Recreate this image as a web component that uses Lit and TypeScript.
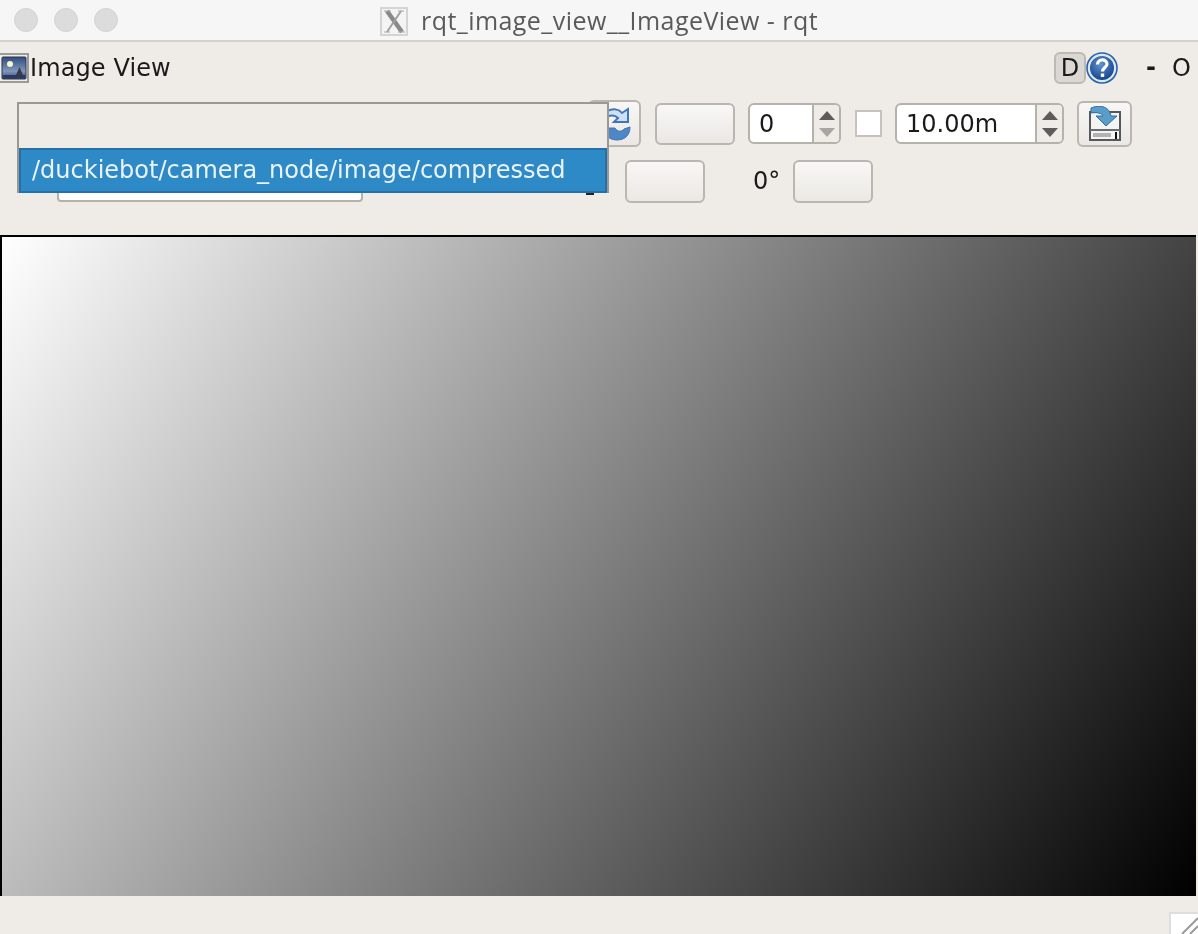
import { LitElement, html, css } from "lit";
import { customElement } from "lit/decorators.js";

@customElement("app-root")
export class AppRoot extends LitElement {
  static styles = css`
    :host { display: block; width: 1198px; height: 934px; position: relative; overflow: hidden; background: #efebe7; font-family: "DejaVu Sans", sans-serif; color: #1a1a1a; }
    .win { display: flex; flex-direction: column; height: 934px; filter: blur(0.45px); }
    .titlebar { flex: none; height: 40px; box-sizing: content-box; border-bottom: 2px solid #d2d2d0; background: #f6f6f6; display: grid; grid-template-columns: 1fr auto 1fr; align-items: center; }
    .dots { display: flex; gap: 16px; padding-left: 14px; }
    .dot { width: 24px; height: 24px; border-radius: 50%; background: #dcdcdc; box-sizing: border-box; border: 1px solid #d3d3d3; }
    .title { display: flex; align-items: center; gap: 13px; font-family: "Open Sans", sans-serif; font-size: 25px; letter-spacing: 0.45px; color: #5a5a5a; white-space: nowrap; }
    .title svg { display: block; margin-top: 2px; }
    .head { flex: none; height: 58px; display: flex; align-items: flex-start; position: relative; }
    .appicon { margin-top: 11px; display: block; flex: none; }
    .headtext { margin-top: 8px; font-size: 24px; line-height: 36px; margin-left: 1px; letter-spacing: 0.1px; }
    .spacer { flex: 1; }
    .dbtn { margin-top: 10px; width: 32px; height: 32px; box-sizing: border-box; border: 2px solid #bdb9b3; border-radius: 6px; background: #dbd8d4; font-size: 24px; line-height: 29px; text-align: center; }
    .help { margin-top: 10px; display: block; }
    .dash { margin: 7px 0 0 28px; font-size: 24px; line-height: 36px; width: 8px; text-align: center; font-weight: 700; }
    .oh { margin: 8px 7px 0 18px; font-size: 24px; line-height: 36px; }
    .row { flex: none; display: flex; align-items: center; }
    .row1 { height: 47px; padding-left: 17px; }
    .row2 { height: 44px; margin-top: 12px; padding-left: 57px; }
    .combo { width: 563px; height: 42px; margin-right: 8px; box-sizing: border-box; border: 2px solid #b5b1ab; border-radius: 6px; }
    .btn { box-sizing: border-box; border: 2px solid #bab6b0; border-radius: 6px; background: linear-gradient(#f8f7f5, #ebe8e4); flex: none; }
    .refresh { width: 53px; height: 47px; margin-right: 14px; display: flex; align-items: center; justify-content: center; padding-left: 8px; }
    .wide { width: 80px; height: 42px; }
    .spin { flex: none; box-sizing: border-box; height: 41px; border: 2px solid #b5b1ab; border-radius: 6px; background: #fff; display: flex; align-items: stretch; font-size: 24px; overflow: hidden; }
    .spin .val { flex: 1; padding-left: 9px; line-height: 39px; }
    .spin .arrows { width: 27px; box-sizing: border-box; border-left: 2px solid #b5b1ab; background: #efebe7; display: flex; flex-direction: column; align-items: center; justify-content: center; gap: 8px; }
    .up { width: 0; height: 0; border-left: 8px solid transparent; border-right: 8px solid transparent; border-bottom: 9px solid #5e5c5a; }
    .down { width: 0; height: 0; border-left: 8px solid transparent; border-right: 8px solid transparent; border-top: 9px solid #5e5c5a; }
    .down.off { border-top-color: #a8a6a2; }
    .spin0 { width: 93px; margin: 0 14px 0 13px; }
    .spin10 { width: 169px; margin-right: 13px; }
    .check { flex: none; width: 27px; height: 27px; box-sizing: border-box; border: 2px solid #c6c2bc; background: #fff; margin-right: 13px; }
    .save { width: 55px; height: 46px; display: flex; align-items: center; justify-content: center; }
    .edit { width: 306px; height: 42px; box-sizing: border-box; border: 2px solid #b5b1ab; border-radius: 4px; background: #fff; flex: none; margin-right: 13px; }
    .small { width: 28px; height: 28px; margin-top: -6px; margin-right: 186px; border-radius: 2px; }
    .tick { width: 8px; height: 4px; background: #222; margin-top: 24px; flex: none; margin-right: 31px; margin-left: -4px; }
    .deg { font-size: 24px; width: 40px; margin: 0 0 0 48px; }
    .row2 .wide { height: 43px; }
    .view { flex: 1; min-height: 0; margin: 32px 2px 0 0; box-sizing: border-box; border-top: 2px solid #000; border-left: 2px solid #000; background: linear-gradient(123deg, #ffffff 0%, #000000 100%); }
    .foot { flex: none; height: 38px; display: flex; justify-content: flex-end; align-items: flex-end; }
    .grip { display: block; }
    .popup { position: absolute; left: 17px; top: 102px; width: 592px; height: 91px; box-sizing: border-box; border: 2px solid #9b9892; background: #efebe7; display: flex; flex-direction: column; filter: blur(0.45px); }
    .blank { height: 44px; flex: none; }
    .item { flex: 1; box-sizing: border-box; border: 2px solid #2371a8; background: #2e89c7; color: #eaf3fa; font-size: 24px; line-height: 41px; padding-left: 11px; white-space: nowrap; }
  `;

  render() {
    return html`
      <div class="win">
        <div class="titlebar">
          <div class="dots"><div class="dot"></div><div class="dot"></div><div class="dot"></div></div>
          <div class="title">
            <svg width="28" height="29" viewBox="0 0 28 29"><rect x="1" y="1" width="26" height="27" fill="#f4f4f4" stroke="#d4d4d4" stroke-width="2"/><path d="M7 4 L22 25" stroke="#8a8a8a" stroke-width="4.5" fill="none"/><path d="M21 4 L7 25" stroke="#a0a0a0" stroke-width="2" fill="none"/><path d="M4 4 H11 M18 4 H24 M4 25 H10 M18 25 H25" stroke="#a8a8a8" stroke-width="1.2"/></svg>
            <span>rqt_image_view__ImageView - rqt</span>
          </div>
          <div></div>
        </div>
        <div class="head">
          <svg class="appicon" width="29" height="30" viewBox="0 0 29 30">
            <rect x="-1" y="1" width="29" height="28" fill="#efebe7" stroke="#9a9a96" stroke-width="2"/>
            <defs><linearGradient id="sky" x1="0" y1="0" x2="0" y2="1"><stop offset="0" stop-color="#2f4a7c"/><stop offset="0.65" stop-color="#7f97bd"/><stop offset="1" stop-color="#34466e"/></linearGradient></defs>
            <rect x="2" y="4" width="24" height="22" rx="1" fill="url(#sky)" stroke="#2a3450" stroke-width="1"/>
            <circle cx="10" cy="11" r="3" fill="#f6f6c8"/>
            <path d="M16 22 L19.5 14 L23 22 Z" fill="#3a3a44"/>
            <rect x="3" y="22" width="22" height="3" fill="#2c3a60"/>
          </svg>
          <div class="headtext">Image View</div>
          <div class="spacer"></div>
          <div class="dbtn">D</div>
          <svg class="help" width="32" height="32" viewBox="0 0 32 32">
            <defs><radialGradient id="hb" cx="0.45" cy="0.35" r="0.7"><stop offset="0" stop-color="#5f93cf"/><stop offset="1" stop-color="#123f86"/></radialGradient></defs>
            <circle cx="16" cy="16" r="15" fill="#dce8f5" stroke="#2a62a8" stroke-width="1.6"/>
            <circle cx="16" cy="16" r="12" fill="url(#hb)"/>
            <path d="M11.5 12.5 C11.5 6.5 21 6.5 21 12 C21 15.5 16.5 15.5 16.5 19.5" fill="none" stroke="#fff" stroke-width="3.2"/>
            <rect x="14.8" y="21.5" width="3.4" height="3.4" fill="#fff"/>
          </svg>
          <div class="dash">-</div>
          <div class="oh">O</div>
        </div>
        <div class="row row1">
          <div class="combo"></div>
          <div class="btn refresh">
            <svg width="24" height="34" viewBox="0 0 24 34">
              <path d="M0 4 C6 1 12 2 15 6 L21 2 L21 15 L7 15 L11 11 C8 8 4 8 0 10 Z" fill="#cfe0f2" stroke="#3f76bb" stroke-width="2"/>
              <path d="M0 21 L8 21 C10 25 15 25 17 22 L23 20 C23 29 17 33 10 33 C5 33 2 31 0 29 Z" fill="#4f86c6" stroke="#3f76bb" stroke-width="1"/>
            </svg>
          </div>
          <div class="btn wide"></div>
          <div class="spin spin0"><div class="val">0</div><div class="arrows"><div class="up"></div><div class="down off"></div></div></div>
          <div class="check"></div>
          <div class="spin spin10"><div class="val">10.00m</div><div class="arrows"><div class="up"></div><div class="down"></div></div></div>
          <div class="btn save">
            <svg width="34" height="36" viewBox="0 0 34 36">
              <rect x="2" y="6" width="30" height="28" fill="#f4f4f2" stroke="#55585c" stroke-width="2"/>
              <rect x="2" y="23" width="30" height="2" fill="#6a6d70"/>
              <rect x="5" y="27" width="18" height="4" fill="#b2b2b0"/>
              <rect x="27" y="26" width="2" height="7" fill="#111"/>
              <path d="M3 2 C10 -1 21 -1 23 10 L29 10 L18 20 L8 10 L15 10 C14 7 8 6 3 7 Z" fill="#5b9ccb" stroke="#2f6f9f" stroke-width="1"/>
            </svg>
          </div>
        </div>
        <div class="row row2">
          <div class="edit"></div>
          <div class="btn small"></div>
          <div class="tick"></div>
          <div class="btn wide"></div>
          <div class="deg">0°</div>
          <div class="btn wide"></div>
        </div>
        <div class="view"></div>
        <div class="foot">
          <svg class="grip" width="29" height="22" viewBox="0 0 29 22">
            <rect x="1" y="1" width="29" height="22" fill="#fff" stroke="#dededc" stroke-width="2"/>
            <path d="M13 22 L29 6 M21 22 L29 14" stroke="#9a9a9a" stroke-width="2"/>
          </svg>
        </div>
      </div>
      <div class="popup">
        <div class="blank"></div>
        <div class="item">/duckiebot/camera_node/image/compressed</div>
      </div>
    `;
  }
}
